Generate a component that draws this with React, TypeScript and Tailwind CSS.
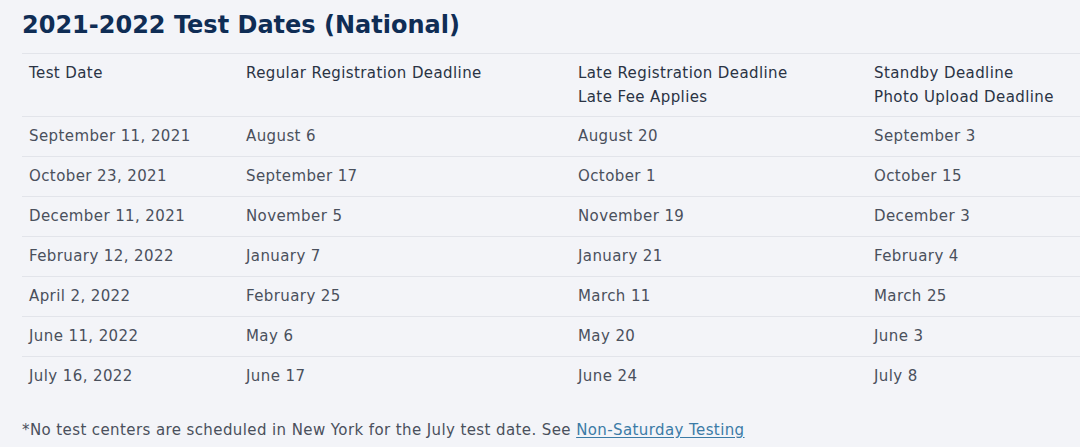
import React from 'react';

const rows: [string, string, string, string][] = [
  ['September 11, 2021', 'August 6', 'August 20', 'September 3'],
  ['October 23, 2021', 'September 17', 'October 1', 'October 15'],
  ['December 11, 2021', 'November 5', 'November 19', 'December 3'],
  ['February 12, 2022', 'January 7', 'January 21', 'February 4'],
  ['April 2, 2022', 'February 25', 'March 11', 'March 25'],
  ['June 11, 2022', 'May 6', 'May 20', 'June 3'],
  ['July 16, 2022', 'June 17', 'June 24', 'July 8'],
];

const App: React.FC = () => {
  return (
    <div
      className="h-[447px] w-[1080px] overflow-hidden bg-[#f3f4f8] pl-[22px]"
      style={{ fontFamily: '"DejaVu Sans", "Open Sans", sans-serif' }}
    >
      <h2 className="pt-[7px] text-[24px] font-bold leading-[36px] text-[#0f2d55]">
        2021-2022 Test Dates (National)
      </h2>

      <div className="mt-[10px] border-t border-[#e2e4ea] text-[15px] tracking-[0.4px]">
        <div className="grid h-[63px] grid-cols-[217px_332px_296px_1fr] border-b border-[#e2e4ea] pt-[7px] leading-[24px] text-[#2a3344]">
          <div className="pl-[7px]">Test Date</div>
          <div className="pl-[7px]">Regular Registration Deadline</div>
          <div className="pl-[7px]">
            <p>Late Registration Deadline</p>
            <p>Late Fee Applies</p>
          </div>
          <div className="pl-[7px]">
            <p>Standby Deadline</p>
            <p>Photo Upload Deadline</p>
          </div>
        </div>

        {rows.map((row, i) => (
          <div
            key={row[0]}
            className={`grid h-[40px] grid-cols-[217px_332px_296px_1fr] items-center pb-[1px] text-[#4a505c] ${
              i < rows.length - 1 ? 'border-b border-[#e2e4ea]' : ''
            }`}
          >
            {row.map((cell, j) => (
              <div key={j} className="pl-[7px]">
                {cell}
              </div>
            ))}
          </div>
        ))}
      </div>

      <p className="mt-[22px] text-[15px] tracking-[0.4px] text-[#4a505c]">
        *No test centers are scheduled in New York for the July test date. See{' '}
        <a href="#" className="text-[#3b7ba6] underline underline-offset-2">
          Non-Saturday Testing
        </a>
      </p>
    </div>
  );
};

export default App;
